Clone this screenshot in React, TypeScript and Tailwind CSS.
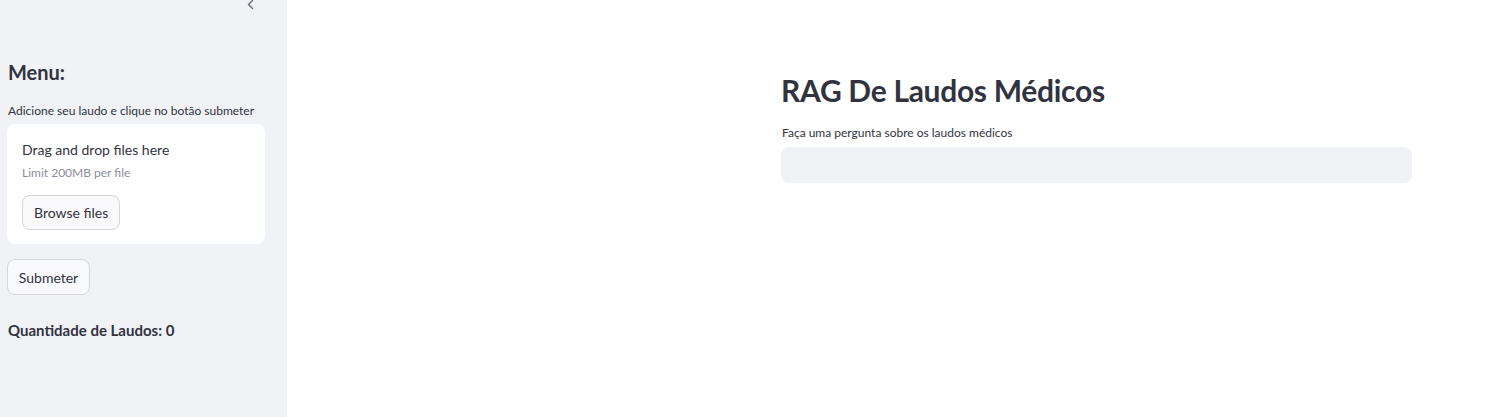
import React from "react";

export default function App() {
  const font = { fontFamily: "Lato, 'Noto Sans', sans-serif" };
  return (
    <div className="flex w-[1495px] h-[417px] overflow-hidden bg-white text-[#31333f]" style={font}>
      <aside className="w-[287px] shrink-0 bg-[#f0f2f6] flex flex-col px-[7px]">
        <div className="flex justify-end pr-[22px] h-[12px] items-start">
          <svg width="12" height="12" viewBox="0 0 12 12">
            <path d="M6.5 0.5 L2.5 4.5 L6.5 8.5" fill="none" stroke="#6b6d7a" strokeWidth="1.4" strokeLinecap="round" strokeLinejoin="round" />
          </svg>
        </div>
        <h2 className="mt-[47px] text-[20px] font-bold leading-[26px] pl-[1px]">Menu:</h2>
        <p className="mt-[18px] text-[12px] leading-[16px] pl-[1px]">Adicione seu laudo e clique no botão submeter</p>
        <div className="mt-[5px] w-[258px] h-[120px] bg-white rounded-[8px] px-[15px] pt-[17px] flex flex-col items-start">
          <div className="text-[14px] leading-[18px]">Drag and drop files here</div>
          <div className="mt-[6px] text-[12px] leading-[16px] text-[#8b8d98]">Limit 200MB per file</div>
          <button className="mt-[14px] h-[35px] px-[11px] rounded-[8px] border border-[#d5d6db] bg-[#f9f9fb] text-[14px]">Browse files</button>
        </div>
        <button className="mt-[15px] self-start h-[36px] w-[83px] rounded-[8px] border border-[#d5d6db] bg-[#f9f9fb] text-[14px]">Submeter</button>
        <div className="mt-[25px] text-[15px] font-bold leading-[20px] pl-[1px]">Quantidade de Laudos: 0</div>
      </aside>
      <main className="flex-1 flex flex-col pl-[494px]">
        <h1 className="mt-[70px] text-[30px] font-bold leading-[40px] tracking-[-0.3px]">RAG De Laudos Médicos</h1>
        <label className="mt-[15px] text-[12px] leading-[16px] pl-[1px]">Faça uma pergunta sobre os laudos médicos</label>
        <div className="mt-[6px] w-[631px] h-[36px] rounded-[8px] bg-[#f0f2f6]" />
      </main>
    </div>
  );
}
